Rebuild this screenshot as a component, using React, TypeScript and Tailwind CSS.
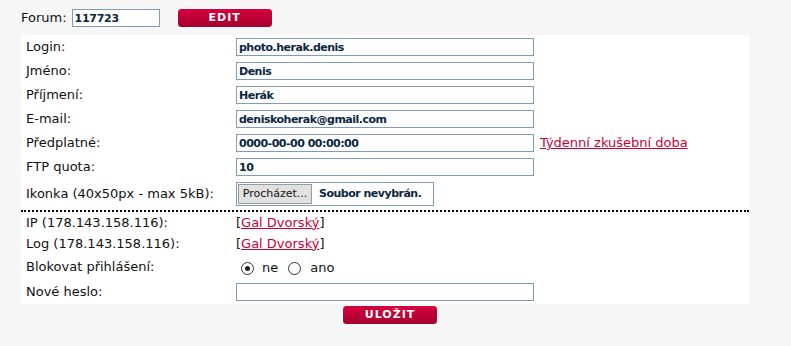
import React from "react";

const inputCls =
  "h-[18px] w-[298px] border border-[#7f9db9] bg-white px-[2px] text-[11px] font-bold tracking-[-0.5px] text-[#0a2640] outline-none";

function Row({ label, children, h = "h-[24px]" }: { label: string; children?: React.ReactNode; h?: string }) {
  return (
    <div className={`flex items-center ${h}`}>
      <div className="w-[215px] shrink-0 pl-[5px] text-[13px] text-[#111]">{label}</div>
      <div className="flex items-center">{children}</div>
    </div>
  );
}

function RedButton({ label, className = "" }: { label: string; className?: string }) {
  return (
    <div
      className={`flex h-[20px] w-[96px] items-center justify-center rounded-[4px] border border-white bg-gradient-to-b from-[#d6003e] to-[#a6002f] text-[11px] font-bold tracking-[1px] text-white ${className}`}
    >
      {label}
    </div>
  );
}

function Radio({ checked }: { checked?: boolean }) {
  return (
    <span className="flex h-[13px] w-[13px] items-center justify-center rounded-full border border-[#333] bg-white">
      {checked && <span className="h-[5px] w-[5px] rounded-full bg-[#222]" />}
    </span>
  );
}

function GalLink() {
  return (
    <span className="text-[13px] text-[#111]">
      [<span className="text-[#cc0033] underline">Gal Dvorský</span>]
    </span>
  );
}

export default function App() {
  return (
    <div className="min-h-screen w-full bg-[#f6f6f6] font-['DejaVu_Sans',Verdana,sans-serif]">
      <div className="flex h-[35px] items-center pt-[1px]">
        <span className="ml-[21px] text-[13px] text-[#111]">Forum:</span>
        <input readOnly value="117723" className="ml-[5px] h-[18px] w-[88px] border border-[#7f9db9] bg-white px-[2px] text-[11px] font-bold tracking-[-0.3px] text-[#0a2640] outline-none" />
        <RedButton label="EDIT" className="ml-[17px]" />
      </div>
      <div className="ml-[21px] w-[728px] bg-white">
        <Row label="Login:">
          <input readOnly value="photo.herak.denis" className={inputCls} />
        </Row>
        <Row label="Jméno:">
          <input readOnly value="Denis" className={inputCls} />
        </Row>
        <Row label="Příjmení:">
          <input readOnly value="Herák" className={inputCls} />
        </Row>
        <Row label="E-mail:">
          <input readOnly value="deniskoherak@gmail.com" className={inputCls} />
        </Row>
        <Row label="Předplatné:">
          <input readOnly value="0000-00-00 00:00:00" className={inputCls} />
          <span className="ml-[6px] text-[13px] text-[#cc0033] underline">Týdenní zkušební doba</span>
        </Row>
        <Row label="FTP quota:">
          <input readOnly value="10" className={inputCls} />
        </Row>
        <Row label="Ikonka (40x50px - max 5kB):" h="h-[30px]">
          <div className="flex h-[24px] w-[198px] items-center border border-[#7f9db9] bg-white pl-[1px]">
            <div className="flex h-[20px] w-[74px] items-center justify-center border border-[#9a9a9a] bg-[#e1e1e1] text-[11px] text-[#111]">
              Procházet...
            </div>
            <span className="ml-[7px] text-[11px] font-bold tracking-[-0.5px] text-[#0a2640]">Soubor nevybrán.</span>
          </div>
        </Row>
        <div className="mt-[1px] border-t-2 border-dotted border-black" />
        <Row label="IP (178.143.158.116):" h="h-[21px]">
          <GalLink />
        </Row>
        <Row label="Log (178.143.158.116):" h="h-[21px]">
          <GalLink />
        </Row>
        <Row label="Blokovat přihlášení:" h="h-[26px]">
          <div className="flex items-center pt-[2px] text-[13px] text-[#111]">
            <span className="ml-[5px]"><Radio checked /></span>
            <span className="ml-[8px]">ne</span>
            <span className="ml-[10px]"><Radio /></span>
            <span className="ml-[9px]">ano</span>
          </div>
        </Row>
        <Row label="Nové heslo:">
          <input readOnly value="" className={inputCls} />
        </Row>
      </div>
      <div className="flex pt-[1px]">
        <RedButton label="ULOŽIT" className="ml-[342px]" />
      </div>
    </div>
  );
}
